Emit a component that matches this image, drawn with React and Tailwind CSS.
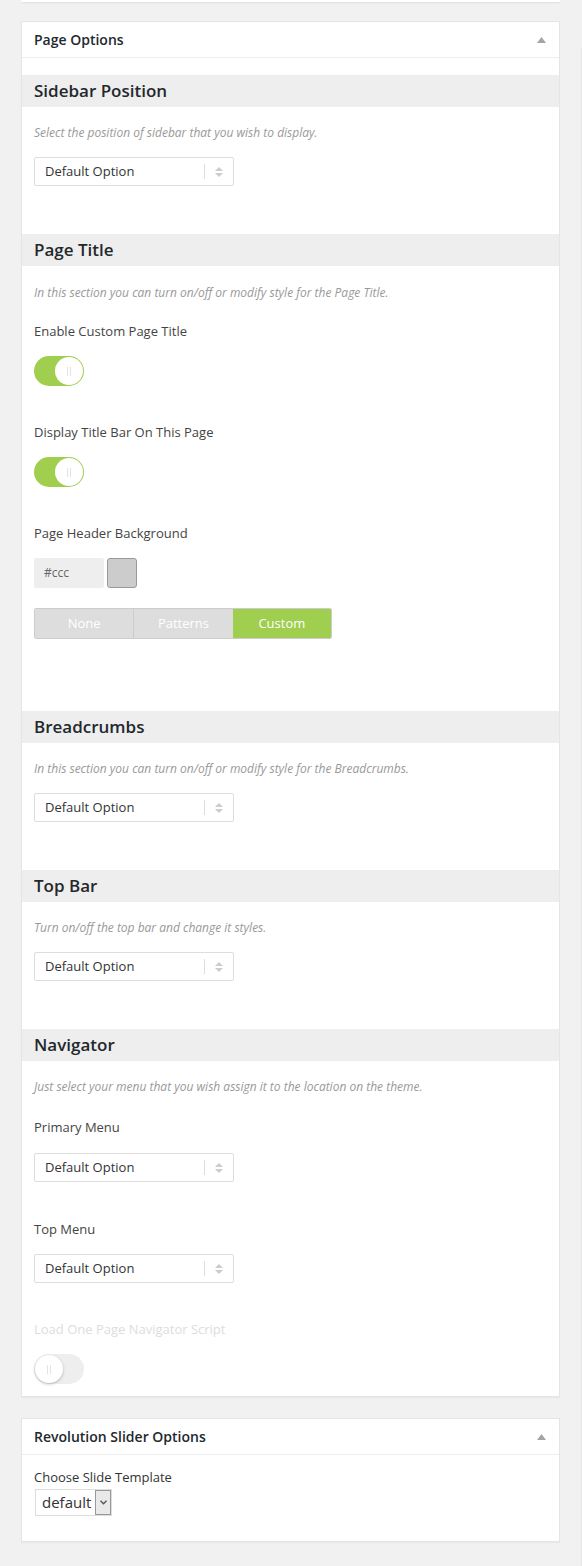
import React from "react";

function SectionHeader({ children }) {
  return (
    <div className="flex h-[32px] items-center bg-[#eeeeee] px-[12px] text-[17px] font-semibold text-[#23282d]">
      {children}
    </div>
  );
}

function Desc({ children }) {
  return <p className="text-[12px] leading-[18px] italic text-[#999999]">{children}</p>;
}

function Label({ children, muted }) {
  return (
    <div className={`text-[13px] leading-[20px] ${muted ? "text-[#dddddd]" : "text-[#444444]"}`}>
      {children}
    </div>
  );
}

function FakeSelect() {
  return (
    <div className="flex h-[29px] w-[200px] items-center rounded-[2px] border border-[#dddddd] bg-white pl-[10px] text-[13px] text-[#333333]">
      <span className="flex-1">Default Option</span>
      <span className="h-[15px] w-px bg-[#dddddd]" />
      <span className="flex w-[28px] flex-col items-center gap-[2px]">
        <svg width="8" height="4" viewBox="0 0 8 4">
          <path d="M0 4 L4 0 L8 4 Z" fill="#cccccc" />
        </svg>
        <svg width="8" height="4" viewBox="0 0 8 4">
          <path d="M0 0 L4 4 L8 0 Z" fill="#cccccc" />
        </svg>
      </span>
    </div>
  );
}

function Toggle({ on }) {
  return (
    <div
      className={`flex h-[30px] w-[50px] items-center rounded-full p-px ${
        on ? "justify-end bg-[#a0ce4e]" : "justify-start bg-[#eeeeee]"
      }`}
    >
      <div
        className={`flex h-[28px] w-[28px] items-center justify-center gap-[2px] rounded-full bg-white ${
          on ? "" : "shadow-[0_1px_3px_rgba(0,0,0,0.25)]"
        }`}
      >
        <span className="h-[9px] w-px bg-[#e3e3e3]" />
        <span className="h-[9px] w-px bg-[#e3e3e3]" />
      </div>
    </div>
  );
}

function Postbox({ title, children }) {
  return (
    <div className="border border-[#e5e5e5] bg-white shadow-[0_1px_1px_rgba(0,0,0,0.04)]">
      <div className="flex h-[36px] items-center justify-between border-b border-[#eeeeee] pl-[12px] pr-[13px] text-[14px] font-semibold text-[#23282d]">
        <span>{title}</span>
        <svg width="9" height="6" viewBox="0 0 9 6">
          <path d="M0 6 L4.5 0 L9 6 Z" fill="#a0a5aa" />
        </svg>
      </div>
      {children}
    </div>
  );
}

export default function App() {
  return (
    <div className="flex min-h-[1566px] bg-[#f1f1f1] font-['Open_Sans',sans-serif]">
      <div className="w-[581px]">
        <div className="mx-[21px] h-[2px] bg-white shadow-[0_1px_2px_rgba(0,0,0,0.08)]" />

        <div className="mx-[21px] mt-[19px]">
          <Postbox title="Page Options">
            <div className="pt-[17px]">
              <SectionHeader>Sidebar Position</SectionHeader>
              <div className="px-[12px] pb-[48px] pt-[17px]">
                <Desc>Select the position of sidebar that you wish to display.</Desc>
                <div className="mt-[15px]">
                  <FakeSelect />
                </div>
              </div>

              <SectionHeader>Page Title</SectionHeader>
              <div className="px-[12px] pb-[72px] pt-[18px]">
                <Desc>In this section you can turn on/off or modify style for the Page Title.</Desc>
                <div className="mt-[19px]">
                  <Label>Enable Custom Page Title</Label>
                </div>
                <div className="mt-[15px]">
                  <Toggle on />
                </div>
                <div className="mt-[36px]">
                  <Label>Display Title Bar On This Page</Label>
                </div>
                <div className="mt-[15px]">
                  <Toggle on />
                </div>
                <div className="mt-[36px]">
                  <Label>Page Header Background</Label>
                </div>
                <div className="mt-[15px] flex gap-[3px]">
                  <div className="flex h-[30px] w-[70px] items-center rounded-[2px] bg-[#eeeeee] pl-[10px] text-[12px] text-[#666666]">
                    #ccc
                  </div>
                  <div className="h-[30px] w-[30px] rounded-[3px] border border-[#999999] bg-[#cccccc]" />
                </div>
                <div className="mt-[20px] flex h-[31px] w-[298px] overflow-hidden rounded-[2px] border border-[#cccccc] text-[13px] text-white">
                  <div className="flex flex-1 items-center justify-center border-r border-[#cccccc] bg-[#dddddd]">None</div>
                  <div className="flex flex-1 items-center justify-center bg-[#dddddd]">Patterns</div>
                  <div className="flex flex-1 items-center justify-center bg-[#a0ce4e]">Custom</div>
                </div>
              </div>

              <SectionHeader>Breadcrumbs</SectionHeader>
              <div className="px-[12px] pb-[48px] pt-[17px]">
                <Desc>In this section you can turn on/off or modify style for the Breadcrumbs.</Desc>
                <div className="mt-[15px]">
                  <FakeSelect />
                </div>
              </div>

              <SectionHeader>Top Bar</SectionHeader>
              <div className="px-[12px] pb-[48px] pt-[17px]">
                <Desc>Turn on/off the top bar and change it styles.</Desc>
                <div className="mt-[15px]">
                  <FakeSelect />
                </div>
              </div>

              <SectionHeader>Navigator</SectionHeader>
              <div className="px-[12px] pb-[12px] pt-[17px]">
                <Desc>Just select your menu that you wish assign it to the location on the theme.</Desc>
                <div className="mt-[21px]">
                  <Label>Primary Menu</Label>
                </div>
                <div className="mt-[16px]">
                  <FakeSelect />
                </div>
                <div className="mt-[37px]">
                  <Label>Top Menu</Label>
                </div>
                <div className="mt-[15px]">
                  <FakeSelect />
                </div>
                <div className="mt-[36px]">
                  <Label muted>Load One Page Navigator Script</Label>
                </div>
                <div className="mt-[15px]">
                  <Toggle />
                </div>
              </div>
            </div>
          </Postbox>
        </div>

        <div className="mx-[21px] mt-[21px]">
          <Postbox title="Revolution Slider Options">
            <div className="px-[12px] pb-[25px] pt-[13px]">
              <div className="text-[13px] leading-[18px] text-[#333333]">Choose Slide Template</div>
              <div className="mt-[3px] ml-px flex h-[27px] w-[77px] items-center border border-[#dddddd] bg-white pl-[6px]">
                <span className="flex-1 text-[15px] text-[#333333]">default</span>
                <span className="flex h-[25px] w-[16px] items-center justify-center border border-[#999999] bg-[#e9e9e9]">
                  <svg width="7" height="5" viewBox="0 0 7 5">
                    <path d="M0.5 0.8 L3.5 3.8 L6.5 0.8" fill="none" stroke="#555555" strokeWidth="1.3" />
                  </svg>
                </span>
              </div>
            </div>
          </Postbox>
        </div>
      </div>
      <div className="mt-[48px] w-px bg-[#e6e6e6]" />
    </div>
  );
}
